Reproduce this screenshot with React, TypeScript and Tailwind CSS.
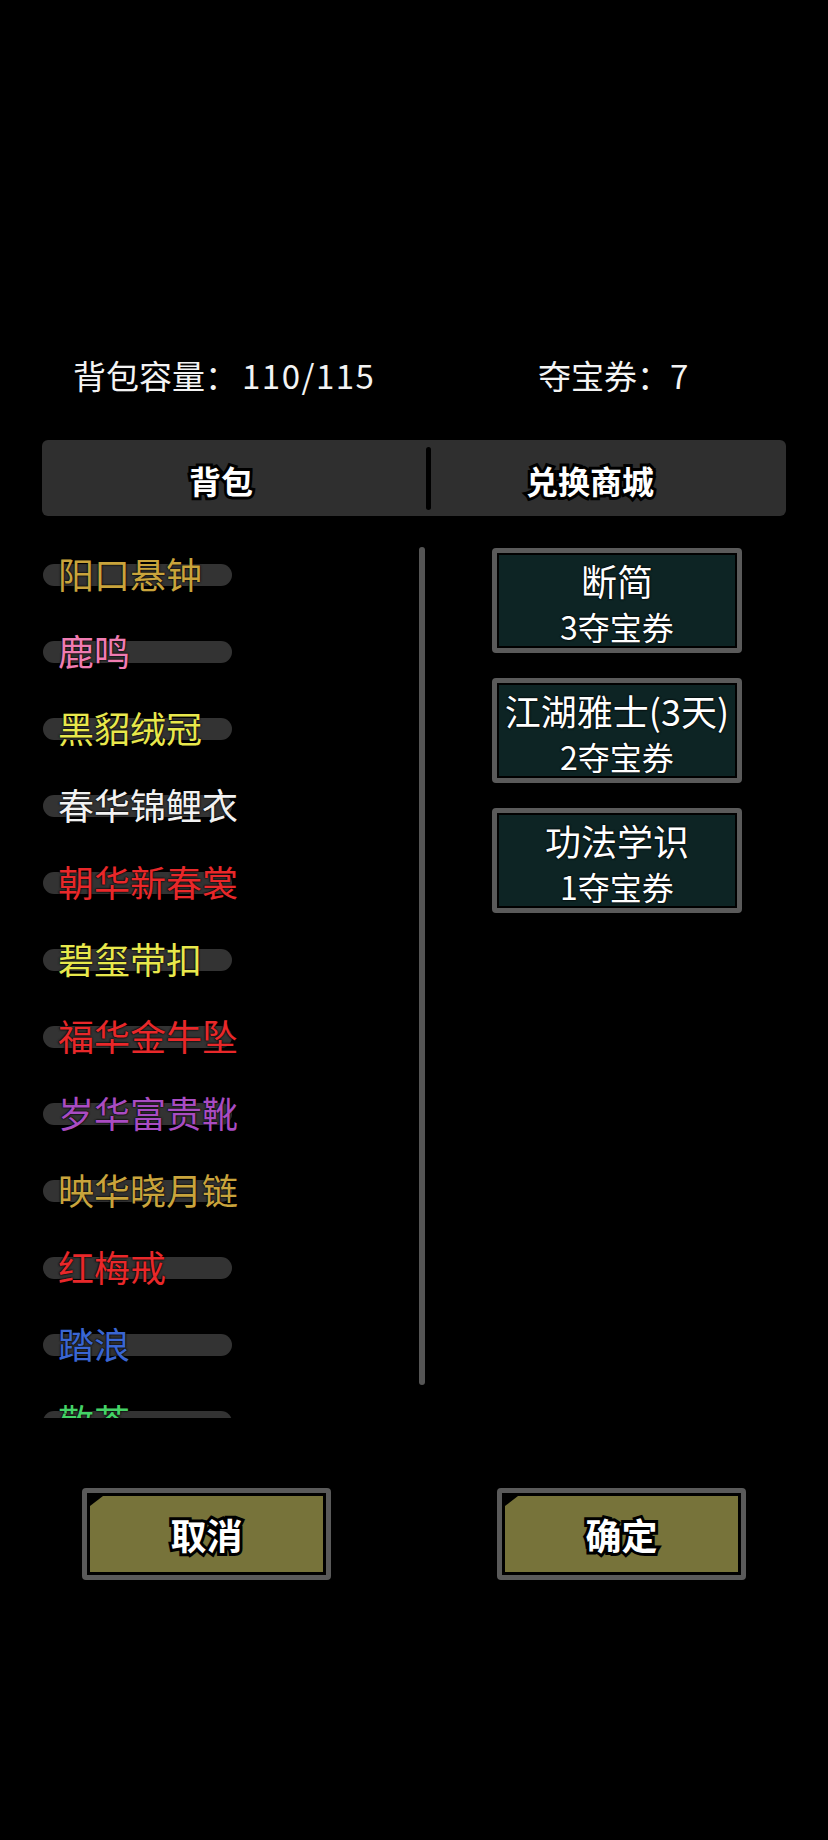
import React from 'react';

interface BagItem {
    name: string;
    color: string;
}

const bagItems: BagItem[] = [
    { name: '阳口悬钟', color: 'text-[#c9a43c]' },
    { name: '鹿鸣', color: 'text-[#f07cb2]' },
    { name: '黑貂绒冠', color: 'text-[#e8e84c]' },
    { name: '春华锦鲤衣', color: 'text-[#f2f2f2]' },
    { name: '朝华新春裳', color: 'text-[#e8282a]' },
    { name: '碧玺带扣', color: 'text-[#e8e84c]' },
    { name: '福华金牛坠', color: 'text-[#e8282a]' },
    { name: '岁华富贵靴', color: 'text-[#a94cc2]' },
    { name: '映华晓月链', color: 'text-[#c9a43c]' },
    { name: '红梅戒', color: 'text-[#e8282a]' },
    { name: '踏浪', color: 'text-[#3a66d2]' },
    { name: '敬茶', color: 'text-[#44d266]' },
];

const shopItems = [
    { name: '断简', price: '3夺宝券' },
    { name: '江湖雅士(3天)', price: '2夺宝券' },
    { name: '功法学识', price: '1夺宝券' },
];

const outline = '[-webkit-text-stroke:6px_#000] [paint-order:stroke_fill]';

function ActionButton({ label }: { label: string }) {
    return (
        <button className="w-[249px] h-[92px] border-[5px] border-[#5a5a5a] rounded-[4px] bg-black p-[3px]">
            <div className="h-full w-full bg-[#77733a] flex items-center justify-center [clip-path:polygon(13px_0,100%_0,100%_100%,0_100%,0_10px)]">
                <span className={`text-[36px] leading-[40px] font-semibold text-white ${outline}`}>{label}</span>
            </div>
        </button>
    );
}

export default function App() {
    return (
        <div className="min-h-[1840px] w-[828px] bg-black text-white font-['Noto_Sans_CJK_SC','Noto_Sans',sans-serif]">
            {/* Header */}
            <div className="pt-[350px] h-[400px] flex text-[33px] leading-[50px] text-[#f4f4f4]">
                <span className="pl-[73px] w-[538px]">
                    背包容量：<span className="ml-[4px] tracking-[1.5px]">110/115</span>
                </span>
                <span>夺宝券：7</span>
            </div>

            {/* Tabs */}
            <div className="mt-[40px] mx-[42px] h-[76px] rounded-[6px] bg-[#2f2f2f] flex items-center">
                <div className="w-[384px] h-full flex items-center justify-center pr-[26px] pt-[4px]">
                    <span className={`text-[32px] font-semibold text-white ${outline}`}>背包</span>
                </div>
                <div className="w-[5px] h-[63px] rounded-full bg-black" />
                <div className="flex-1 h-full flex items-center justify-center pr-[37px] pt-[4px]">
                    <span className={`text-[32px] font-semibold text-white ${outline}`}>兑换商城</span>
                </div>
            </div>

            {/* Content */}
            <div className="flex pl-[42px]">
                <div className="w-[386px] flex">
                    <div className="mt-[20px] h-[882px] w-[377px] overflow-hidden">
                        {bagItems.map((item) => (
                            <div key={item.name} className="h-[77px] grid items-center">
                                <div className="col-start-1 row-start-1 ml-[1px] w-[189px] h-[22px] rounded-full bg-[#333333]" />
                                <span
                                    className={`col-start-1 row-start-1 ml-[16px] mb-[3px] text-[36px] leading-[40px] ${item.color} [text-shadow:0_0_2px_#000,0_0_2px_#000]`}
                                >
                                    {item.name}
                                </span>
                            </div>
                        ))}
                    </div>
                    <div className="mt-[31px] h-[838px] w-[6px] rounded-full bg-[#555555]" />
                </div>

                <div className="pl-[64px] pt-[32px] flex flex-col gap-[25px]">
                    {shopItems.map((item) => (
                        <button
                            key={item.name}
                            className="w-[250px] h-[105px] border-[5px] border-[#5a5a5a] rounded-[4px] bg-black p-[2px]"
                        >
                            <div className="h-full w-full bg-[#0d2424] flex flex-col items-center pt-[2px] text-white [text-shadow:0_0_2px_#000,0_0_2px_#000]">
                                <span className="text-[36px] leading-[46px] whitespace-nowrap">{item.name}</span>
                                <span className="text-[32px] leading-[46px]">{item.price}</span>
                            </div>
                        </button>
                    ))}
                </div>
            </div>

            {/* Footer buttons */}
            <div className="mt-[70px] px-[82px] flex justify-between">
                <ActionButton label="取消" />
                <ActionButton label="确定" />
            </div>
        </div>
    );
}
